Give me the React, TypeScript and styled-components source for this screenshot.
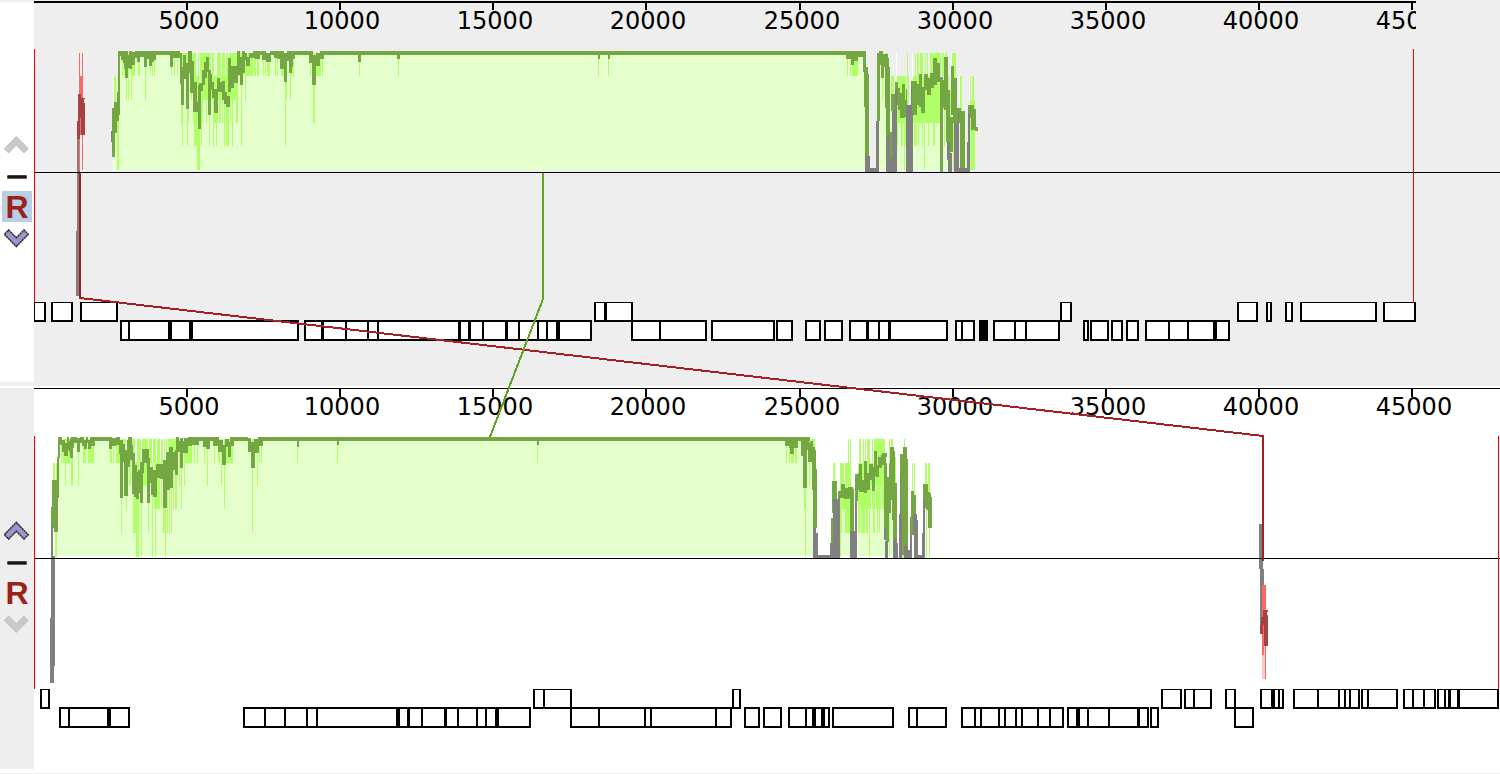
import React from "react";
import styled, { createGlobalStyle } from "styled-components";

const GlobalStyle = createGlobalStyle`
  body { margin: 0; background: #fff; font-family: "DejaVu Sans", sans-serif; }
`;

const Viewer = styled.main`
  position: relative;
  border-bottom: 1px solid #eeeeee;
`;
const Panel = styled.section<{ $selected?: boolean }>`
  display: grid;
  grid-template-columns: 34px minmax(0, 1fr);
  background: ${(p) => (p.$selected ? "#eeeeee" : "#ffffff")};
`;
const Gutter = styled.div<{ $selected?: boolean }>`
  display: flex;
  flex-direction: column;
  align-items: center;
  box-sizing: border-box;
  margin: 2px 0 4px;
  padding-top: 127px;
  background: ${(p) => (p.$selected ? "#ffffff" : "#eeeeee")};
`;
const GutterButton = styled.button<{ $on?: boolean }>`
  display: flex;
  align-items: center;
  justify-content: center;
  width: 30px;
  height: 31px;
  padding: 0;
  border: 0;
  background: ${(p) => (p.$on ? "#b8cfe5" : "transparent")};
  color: #9a2318;
  font: bold 32px/28px "Liberation Sans", sans-serif;
`;
const Track = styled.svg`
  display: block;
  width: 100%;
  height: auto;
  shape-rendering: crispEdges;
`;
const Links = styled.svg`
  position: absolute;
  top: 0;
  left: 34px;
  width: calc(100% - 34px);
  height: auto;
  pointer-events: none;
  shape-rendering: crispEdges;
`;
const TickLabel = styled.text`
  font: 24px "DejaVu Sans", sans-serif;
  text-anchor: middle;
`;

const LIGHT = "#e4ffcc";
const BRIGHT = "#b0ff66";
const DARK = "#74a744";
const GRAY = "#808080";
const RED = "#a64242";
const RED_BRIGHT = "#ff6666";

/* One block of a profile: left, right, top, bottom, on a grid of three units to a pixel. */
type Block = [number, number, number, number];

const Blocks = ({ data, x = 0, y = 0, fill }: { data: Block[]; x?: number; y?: number; fill: string }) => (
  <path
    fill={fill}
    d={data
      .map(([l, r, t, b]) => {
        const [x0, x1, y0, y1] = [l, r, t, b].map((v) => Math.round(v / 3));
        return `M${x + x0} ${y + y0}H${x + Math.max(x1, x0 + 1)}V${y + y1}H${x + x0}Z`;
      })
      .join("")}
  />
);

/* Hanging bars: left, width, bottom in pixels, all starting at the same top. */
const Hangers = ({ data, top }: { data: number[][]; top: number }) => (
  <path fill={BRIGHT} d={data.map(([l, w, b]) => `M${l} ${top}h${w}V${b}h${-w}Z`).join("")} />
);

type Gene = { at: [number, number]; cuts?: [number, number][] };
const g = (l: number, r: number, ...cuts: [number, number][]): Gene => ({ at: [l, r], cuts });

const Genes = ({ list, y, lower }: { list: Gene[]; y: number; lower?: boolean }) => {
  const h = lower ? 21 : 20;
  const top = lower ? 2 : 1;
  return (
    <g>
      {list.map(({ at: [l, r], cuts = [] }) => (
        <g key={l}>
          <rect x={l} y={y} width={r - l} height={h} fill="#000" />
          <rect x={l + 2} y={y + top} width={r - l - 4} height={h - top - 2} fill="#fff" />
          {cuts.map(([c, w]) => (
            <rect key={c} x={c} y={y} width={w} height={h} fill="#000" />
          ))}
        </g>
      ))}
    </g>
  );
};

const TICKS = [5000, 10000, 15000, 20000, 25000, 30000, 35000, 40000, 45000];
const Ruler = ({ y, weight, end }: { y: number; weight: number; end: number }) => (
  <g>
    <rect x={34} y={y} width={end - 34} height={weight} />
    {TICKS.map((n) => {
      const x = 34 + Math.round(n * 0.03062);
      return (
        <g key={n}>
          <rect x={x - 1} y={y} width={2} height={9} />
          <TickLabel x={x + 2} y={y === 1 ? 29 : 415}>{n}</TickLabel>
        </g>
      );
    })}
  </g>
);

const UP_1: Gene[] = [
  g(33, 46), g(51, 73), g(80, 118), g(594, 633, [604, 3]), g(1060, 1072), g(1237, 1258),
  g(1266, 1272), g(1285, 1293), g(1300, 1377), g(1383, 1416),
];
const LOW_1: Gene[] = [
  g(120, 299, [128, 2], [168, 4], [189, 4]),
  g(304, 592, [321, 3], [345, 2], [367, 2], [377, 2], [458, 3], [468, 3], [482, 2], [505, 3], [518, 2], [537, 2], [546, 2], [556, 4]),
  g(631, 707, [659, 2]), g(711, 775), g(776, 793), g(805, 821), g(824, 843),
  g(849, 948, [866, 3], [878, 2], [888, 3]), g(955, 975, [961, 2]), g(979, 988, [979, 9]),
  g(993, 1060, [1014, 2], [1025, 2]), g(1083, 1089), g(1090, 1109), g(1111, 1123), g(1126, 1139),
  g(1145, 1230, [1168, 2], [1187, 2], [1213, 4]),
];
const UP_2: Gene[] = [
  g(40, 50), g(533, 572, [543, 2]), g(732, 741), g(1161, 1182), g(1184, 1212, [1193, 2]), g(1225, 1236),
  g(1260, 1284, [1271, 4], [1278, 2]), g(1293, 1360, [1317, 2], [1338, 2], [1344, 2], [1349, 2]),
  g(1361, 1398, [1367, 2]), g(1403, 1436, [1412, 2], [1423, 2]),
  g(1437, 1499, [1444, 2], [1448, 3], [1457, 3]),
];
const LOW_2: Gene[] = [
  g(59, 130, [68, 2], [107, 4]),
  g(243, 531, [264, 2], [284, 2], [306, 2], [316, 2], [396, 4], [407, 3], [421, 2], [444, 3], [457, 2], [476, 2], [485, 2], [495, 4]),
  g(570, 732, [598, 2], [644, 2], [650, 2], [715, 2]), g(744, 760), g(763, 782),
  g(788, 830, [805, 2], [812, 4], [821, 4]), g(832, 894), g(908, 947, [916, 2]),
  g(961, 1064, [974, 2], [980, 2], [998, 2], [1004, 2], [1015, 2], [1021, 2], [1037, 2], [1049, 2]),
  g(1067, 1149, [1076, 4], [1087, 2], [1108, 2], [1137, 3]), g(1150, 1159), g(1234, 1254),
];

const HANG_1 = [
  [122, 1, 76], [124, 3, 76], [126, 1, 100], [128, 1, 100], [131, 1, 100], [132, 3, 76], [138, 2, 76], [145, 1, 100],
  [150, 1, 76], [152, 1, 76], [154, 1, 76], [171, 1, 76], [174, 1, 76], [177, 1, 76], [180, 60, 76], [181, 2, 123], [182, 1, 146],
  [187, 1, 146], [188, 1, 123], [191, 1, 100], [193, 2, 123], [194, 3, 146], [197, 3, 170], [201, 1, 146], [202, 1, 123],
  [206, 1, 123], [209, 1, 146], [203, 35, 100], [213, 1, 146], [214, 4, 123], [216, 1, 146], [219, 2, 123], [222, 1, 123],
  [224, 1, 146], [226, 3, 146], [230, 1, 123], [232, 1, 146], [236, 2, 123], [239, 2, 76], [241, 1, 146],
  [242, 2, 76], [245, 1, 100], [246, 7, 76], [254, 2, 76], [257, 2, 76], [263, 1, 76], [265, 1, 76], [267, 3, 76],
  [275, 1, 76], [277, 1, 76], [281, 3, 76], [285, 1, 146], [286, 1, 100], [290, 1, 100], [291, 3, 76],
  [310, 1, 76], [313, 2, 123], [316, 5, 76], [322, 1, 76], [359, 1, 76], [398, 1, 76], [598, 1, 76], [608, 1, 76],
  [847, 1, 76], [850, 1, 76], [852, 6, 76],
];
const DARK_1A: Block[] = [
  [336, 345, 325, 470], [342, 351, 306, 400], [351, 356, 275, 362], [354, 360, 153, 345], [360, 363, 153, 168],
  [363, 369, 153, 180], [369, 372, 153, 189], [372, 378, 153, 207], [375, 384, 153, 234], [384, 390, 165, 204],
  [387, 396, 153, 206], [396, 405, 156, 195], [405, 412, 153, 174], [411, 420, 153, 186], [420, 432, 153, 171],
  [432, 441, 153, 202], [441, 447, 153, 177], [447, 456, 153, 197], [456, 462, 153, 186], [462, 468, 153, 180],
  [468, 510, 153, 165],
];
const DARK_1B: Block[] = [
  [0, 8, 33, 82], [8, 30, 33, 55], [30, 36, 38, 132], [34, 42, 80, 195], [39, 48, 45, 118], [48, 57, 70, 207],
  [54, 66, 33, 98], [60, 72, 62, 160], [69, 81, 125, 215], [78, 86, 185, 215], [84, 93, 135, 267], [87, 99, 130, 153],
  [96, 105, 90, 135], [103, 110, 65, 115], [108, 117, 50, 95], [114, 123, 90, 225], [120, 126, 102, 150], [125, 132, 125, 175],
  [132, 143, 148, 218], [141, 150, 113, 155], [147, 156, 127, 157], [156, 165, 123, 180], [162, 170, 155, 193],
  [168, 180, 168, 200], [174, 183, 55, 155], [180, 192, 78, 145], [192, 204, 78, 130], [201, 210, 33, 105],
  [210, 219, 50, 135], [216, 225, 33, 100], [222, 230, 40, 60], [227, 240, 50, 78], [237, 249, 40, 55], [249, 255, 33, 55],
  [255, 270, 33, 57], [270, 276, 33, 45], [276, 288, 33, 60], [288, 302, 38, 65], [300, 312, 33, 45], [312, 322, 33, 55],
  [321, 330, 33, 58], [330, 342, 33, 87], [342, 351, 40, 125], [351, 357, 33, 62], [357, 366, 33, 98], [363, 369, 40, 80],
  [366, 375, 33, 57], [375, 417, 33, 45], [417, 430, 33, 68], [426, 438, 45, 135], [438, 450, 40, 78], [450, 462, 33, 57],
  [456, 2088, 33, 45], [564, 573, 33, 66], [682, 690, 33, 56], [1284, 1290, 33, 57], [1314, 1320, 33, 57],
];
const DARK_1C: Block[] = [
  [0, 50, 33, 45], [48, 62, 36, 58], [62, 72, 40, 76], [70, 84, 40, 62], [81, 100, 33, 52], [99, 108, 33, 95],
  [102, 114, 80, 200], [105, 117, 102, 348], [141, 150, 40, 243], [147, 160, 33, 75], [153, 163, 50, 113], [160, 174, 42, 82],
  [165, 177, 55, 205], [168, 180, 80, 285], [180, 189, 275, 355], [183, 195, 162, 213], [195, 204, 125, 180],
  [198, 210, 145, 195], [204, 216, 160, 210], [210, 222, 180, 235], [216, 225, 132, 235], [222, 231, 180, 230], [228, 231, 147, 180],
  [243, 260, 123, 225], [258, 270, 133, 195], [267, 276, 102, 200], [273, 285, 140, 218], [282, 294, 102, 150],
  [291, 303, 115, 165], [300, 312, 100, 145], [309, 321, 55, 135], [318, 330, 68, 125], [330, 339, 110, 395],
  [330, 348, 120, 205], [342, 354, 50, 210], [349, 360, 150, 305], [354, 369, 230, 335], [363, 372, 78, 225],
  [369, 381, 115, 250], [376, 394, 205, 250], [390, 405, 212, 385], [414, 432, 195, 235], [423, 438, 207, 270], [435, 443, 262, 273],
];
const GRAY_1: Block[] = [
  [105, 120, 348, 395], [108, 148, 384, 396], [138, 147, 243, 390], [168, 180, 285, 396], [171, 186, 354, 396],
  [186, 200, 213, 396], [195, 200, 150, 396], [228, 243, 195, 396], [231, 249, 220, 396], [243, 246, 138, 396],
  [351, 360, 305, 360], [354, 366, 340, 396], [372, 387, 250, 396], [384, 388, 220, 396], [384, 420, 384, 396], [411, 418, 305, 385], [414, 420, 220, 385],
];
const BRIGHT_1: Block[] = [
  [156, 159, 60, 180], [165, 174, 39, 180], [183, 192, 108, 165], [198, 228, 108, 249], [201, 204, 249, 318], [213, 219, 249, 318], [222, 225, 249, 390],
  [225, 231, 200, 318], [231, 234, 39, 108], [231, 237, 108, 200], [246, 249, 39, 108], [249, 330, 108, 249], [255, 258, 39, 108], [261, 267, 39, 108],
  [270, 279, 39, 108], [285, 288, 39, 108], [291, 293, 39, 108], [300, 334, 39, 108], [336, 342, 39, 108],
  [345, 351, 39, 108], [252, 261, 249, 318], [264, 267, 249, 318], [276, 279, 249, 318], [282, 285, 249, 390],
  [294, 297, 249, 318], [309, 315, 249, 318], [342, 345, 205, 318], [354, 357, 108, 249], [357, 363, 150, 249], [366, 378, 39, 120],
  [369, 372, 249, 390], [390, 396, 108, 215], [402, 406, 215, 390], [420, 424, 108, 390], [426, 432, 108, 390], [420, 435, 180, 390],
];

const HANG_2 = [
  [61, 1, 463], [63, 4, 463], [65, 1, 486], [67, 3, 463], [71, 2, 486], [78, 1, 486], [83, 3, 463], [88, 6, 463],
  [110, 2, 463], [113, 1, 463], [116, 4, 463], [121, 1, 533], [122, 56, 463], [126, 1, 509], [129, 2, 486], [133, 6, 533],
  [136, 3, 557], [141, 1, 557], [143, 6, 486], [148, 1, 533], [152, 1, 557], [155, 1, 557], [154, 6, 509], [161, 1, 509],
  [163, 3, 533], [165, 1, 557], [167, 1, 533], [169, 1, 533], [171, 1, 533], [173, 1, 509], [175, 2, 509], [179, 1, 486],
  [181, 1, 509], [184, 1, 486], [185, 7, 463], [194, 1, 463], [197, 1, 463], [204, 1, 463], [207, 1, 486], [214, 1, 463],
  [218, 2, 463], [221, 1, 486], [224, 1, 509], [225, 8, 463], [252, 1, 533], [253, 1, 463], [257, 1, 486], [259, 1, 463],
  [261, 1, 463], [297, 1, 463], [337, 1, 463], [537, 1, 463],
];
const DARK_2A: Block[] = [
  [153, 159, 260, 315], [156, 166, 180, 325], [161, 173, 222, 335], [165, 172, 180, 320], [170, 177, 110, 235], [174, 180, 51, 115],
  [180, 186, 51, 75], [186, 195, 60, 95], [193, 204, 68, 107], [201, 207, 51, 90], [207, 213, 62, 97], [210, 219, 55, 113],
  [213, 222, 51, 85], [222, 231, 51, 68], [231, 240, 55, 95], [239, 246, 51, 70], [246, 253, 51, 78], [252, 260, 60, 88],
  [258, 264, 51, 70], [264, 273, 60, 88], [270, 285, 51, 78], [285, 327, 51, 63], [327, 336, 51, 87], [336, 348, 55, 78],
  [348, 360, 51, 76], [357, 363, 70, 103], [360, 369, 60, 235], [366, 375, 72, 125], [373, 384, 90, 228], [381, 390, 60, 140],
  [384, 396, 51, 80], [390, 399, 75, 120], [396, 404, 100, 222], [402, 411, 135, 232], [407, 417, 155, 237], [415, 423, 150, 220],
  [420, 429, 125, 250], [426, 432, 87, 160], [432, 447, 87, 130], [441, 450, 115, 250], [447, 459, 140, 190],
  [453, 465, 155, 225], [459, 471, 150, 230], [468, 480, 133, 175], [480, 492, 133, 178], [489, 501, 120, 263],
  [498, 510, 95, 210], [507, 519, 80, 205], [516, 528, 95, 150], [524, 534, 90, 165], [528, 537, 51, 90], [534, 543, 62, 95],
  [540, 549, 55, 143], [546, 555, 62, 100], [552, 564, 53, 100], [563, 576, 51, 78], [576, 598, 51, 76], [597, 612, 51, 63],
  [610, 630, 51, 80], [618, 630, 60, 87], [628, 642, 51, 63], [640, 657, 51, 78], [654, 669, 60, 97], [667, 678, 75, 135],
  [676, 687, 57, 80], [684, 693, 65, 112], [690, 702, 51, 78], [700, 744, 51, 63], [744, 754, 55, 95], [753, 765, 65, 145],
  [762, 776, 57, 100], [774, 788, 51, 78], [786, 2315, 51, 63], [891, 897, 51, 80], [1011, 1017, 51, 75], [1611, 1617, 51, 75],
];
const DARK_2B: Block[] = [
  [0, 120, 21, 33], [45, 57, 21, 48], [57, 63, 30, 54], [60, 72, 30, 72], [70, 84, 27, 55], [93, 102, 27, 78], [99, 111, 33, 174],
  [108, 117, 27, 60], [114, 126, 40, 95], [120, 130, 33, 85], [126, 135, 50, 180], [129, 141, 118, 294], [132, 138, 60, 130],
  [183, 192, 264, 340], [186, 198, 153, 250], [194, 201, 153, 210], [204, 216, 183, 205], [213, 225, 162, 205],
  [222, 237, 173, 207], [234, 250, 172, 205], [240, 252, 178, 303], [255, 264, 132, 213], [264, 273, 130, 180],
  [267, 276, 102, 185], [273, 285, 150, 185], [282, 291, 93, 188], [288, 300, 130, 180], [297, 309, 102, 150], [306, 315, 110, 182],
  [312, 321, 63, 138], [318, 327, 105, 142], [324, 336, 80, 115], [333, 348, 75, 105], [337, 350, 68, 80], [342, 351, 100, 295],
  [348, 357, 140, 335], [354, 363, 160, 250], [357, 366, 100, 210], [360, 372, 50, 210], [366, 375, 62, 270], [369, 380, 160, 327],
  [390, 402, 72, 374], [399, 411, 52, 350], [405, 414, 87, 350], [420, 426, 262, 315], [423, 432, 183, 315],
  [432, 438, 195, 252], [459, 474, 162, 235], [468, 480, 185, 240], [474, 486, 200, 294], [480, 483, 190, 205],
];
const GRAY_2: Block[] = [
  [129, 144, 308, 384], [129, 139, 294, 320], [135, 189, 375, 384], [180, 190, 340, 384], [189, 210, 207, 384], [204, 210, 200, 240],
  [240, 255, 303, 384], [249, 260, 312, 384], [255, 261, 213, 384], [342, 348, 295, 330], [345, 354, 333, 384], [369, 381, 327, 384], [375, 384, 340, 384],
  [387, 396, 252, 384], [390, 393, 135, 384], [402, 413, 348, 384], [402, 423, 360, 384], [420, 426, 315, 384],
  [429, 441, 252, 315], [432, 444, 270, 384], [435, 465, 375, 384], [456, 462, 309, 384], [459, 465, 210, 384],
];
const BRIGHT_2: Block[] = [
  [48, 51, 33, 99], [57, 60, 33, 99], [63, 72, 33, 99], [75, 81, 33, 99], [102, 106, 27, 237], [105, 108, 27, 381],
  [117, 120, 33, 168], [123, 135, 27, 99], [132, 135, 27, 120], [189, 195, 99, 153], [210, 222, 99, 180], [225, 243, 99, 180],
  [207, 250, 180, 309], [210, 213, 309, 381], [234, 237, 27, 99], [240, 243, 27, 99], [264, 345, 99, 237], [267, 273, 27, 99], [279, 282, 27, 99],
  [285, 288, 27, 99], [291, 300, 27, 99], [306, 309, 27, 99], [312, 345, 27, 99], [264, 270, 237, 309], [273, 285, 237, 309],
  [288, 294, 237, 309], [297, 300, 237, 381], [309, 315, 237, 309], [321, 324, 237, 309], [327, 330, 237, 309],
  [357, 360, 27, 381], [363, 369, 27, 60], [366, 378, 80, 237], [396, 402, 300, 384], [402, 405, 27, 55], [426, 429, 99, 183], [432, 435, 99, 252],
  [465, 471, 99, 165], [474, 480, 99, 205], [468, 471, 230, 381], [477, 480, 280, 381],
];

const Chevron = ({ down, active }: { down?: boolean; active?: boolean }) => (
  <svg width="30" height="31" viewBox="0 0 30 31" aria-hidden="true">
    <path
      transform={down ? "matrix(1 0 0 -1 0 32)" : undefined}
      d="M14.3 7.5 26.3 19.7 22 24 14.3 16.2 6.6 24 2.3 19.7Z"
      fill={active ? "#9999cf" : "#c9c9c9"}
      stroke={active ? "#343438" : "#c0c0c0"}
      strokeWidth={active ? 1.6 : 1}
      strokeDasharray={active ? "2.2 .5" : undefined}
    />
  </svg>
);
const Dash = () => (
  <svg width="30" height="31" viewBox="0 0 30 31" aria-hidden="true">
    <rect x="5" y="15" width="20" height="4" rx="1" fill="#777" />
    <rect x="5.5" y="15.6" width="19" height="2.6" rx="1" fill="#161616" />
  </svg>
);

const Controls = ({ selected }: { selected?: boolean }) => (
  <Gutter $selected={selected}>
    <GutterButton type="button" aria-label="Move sequence up"><Chevron active={!selected} /></GutterButton>
    <GutterButton type="button" aria-label="Collapse sequence"><Dash /></GutterButton>
    <GutterButton type="button" $on={selected} aria-pressed={!!selected}>R</GutterButton>
    <GutterButton type="button" aria-label="Move sequence down"><Chevron down active={selected} /></GutterButton>
  </Gutter>
);

const Gaps = ({ data, y, fill }: { data: number[][]; y: number; fill: string }) => (
  <path fill={fill} d={data.map(([x, w]) => `M${x} ${y}h${w}v23h${-w}Z`).join("")} />
);

export default function App() {
  return (
    <>
      <GlobalStyle />
      <Viewer>
        <Panel $selected>
          <Controls selected />
          <Track viewBox="34 0 1466 386" role="img" aria-label="First genome">
            <defs><clipPath id="firstRange"><rect x="34" y="0" width="1382" height="50" /></clipPath></defs>
            <g clipPath="url(#firstRange)"><Ruler y={1} weight={2} end={1416} /></g>
            <path fill={LIGHT} d="M114 76h5V53H866V170H114ZM879 60h9V170h-9ZM890 108h8V170h-8ZM898 123h9V170h-9ZM913 100h27V170h-27ZM945 123h5V170h-5ZM965 120h1V170h-1Z" />
            <Hangers data={HANG_1} top={53} />
            <Gaps data={[[196, 2], [199, 1], [211, 1], [214, 3], [221, 1], [225, 1], [228, 1]]} y={53} fill="#eeeeee" />
            <Blocks data={[[342, 348, 228, 315], [351, 357, 300, 510]]} fill={BRIGHT} />
            <Blocks data={BRIGHT_1} x={830} y={40} fill={BRIGHT} />
            <path fill="#fff" d="M78 76h1v20h-1ZM113 76h1v95h-1ZM896 53h1v50h-1ZM912 53h1v35h-1ZM951 53h1v60h-1ZM959 76h1v35h-1ZM969 76h1v40h-1Z" />
            <Blocks data={[[333, 339, 393, 425]]} fill={GRAY} />
            <Blocks data={DARK_1A} fill={DARK} />
            <Blocks data={DARK_1B} x={170} y={40} fill={DARK} />
            <Blocks data={DARK_1C} x={830} y={40} fill={DARK} />
            <Blocks data={GRAY_1} x={830} y={40} fill={GRAY} />
            <Blocks data={[[231, 240, 415, 700], [228, 238, 693, 888]]} fill={GRAY} />
            <Blocks data={[[237, 240, 159, 510], [246, 249, 159, 510], [237, 249, 228, 405]]} fill={RED_BRIGHT} />
            <Blocks data={[[234, 243, 282, 354], [231, 240, 362, 417], [234, 240, 350, 417], [243, 252, 293, 405], [249, 255, 308, 405], [252, 255, 294, 298]]} fill={RED} />
            <rect x="34" y="172" width="1466" height="1" />
            <rect x="34" y="49" width="1" height="253" fill="#f00" />
            <Genes list={UP_1} y={302} />
            <Genes list={LOW_1} y={320} lower />
            <rect x="1413" y="49" width="1" height="254" fill="#f00" />
          </Track>
        </Panel>
        <Panel>
          <Controls />
          <Track viewBox="34 386 1466 387" role="img" aria-label="Second genome">
            <Ruler y={388} weight={1} end={1500} />
            <path fill={LIGHT} d="M55 530h4V439H813V556H55ZM840 509h10V556h-10ZM858 486h27V556h-27ZM889 509h4V556h-4Z" />
            <Hangers data={HANG_2} top={439} />
            <Gaps data={[[126, 2], [135, 2], [141, 1], [148, 1], [152, 1], [156, 1], [160, 1], [163, 1], [165, 1], [167, 1]]} y={439} fill="#ffffff" />
            <Blocks data={[[159, 164, 129, 180], [168, 172, 129, 180], [165, 171, 330, 411]]} y={420} fill={BRIGHT} />
            <Blocks data={BRIGHT_2} x={770} y={430} fill={BRIGHT} />
            <Blocks data={[[216, 225, 237, 309], [303, 306, 168, 237], [315, 318, 168, 237], [333, 336, 168, 237]]} x={770} y={430} fill={LIGHT} />
            <Blocks data={DARK_2A} y={420} fill={DARK} />
            <Blocks data={DARK_2B} x={770} y={430} fill={DARK} />
            <Blocks data={GRAY_2} x={770} y={430} fill={GRAY} />
            <Blocks data={[[153, 159, 315, 420], [153, 165, 408, 738], [150, 162, 594, 788]]} y={420} fill={GRAY} />
            <Blocks data={[[477, 489, 42, 177], [480, 492, 177, 330], [480, 486, 320, 352]]} x={1100} y={510} fill={GRAY} />
            <Blocks data={[[486, 495, 405, 507]]} x={1100} y={510} fill="#ffc8c8" />
            <Blocks data={[[486, 498, 225, 345], [486, 492, 340, 435], [495, 498, 400, 507]]} x={1100} y={510} fill={RED_BRIGHT} />
            <Blocks data={[[489, 501, 300, 345], [501, 504, 300, 306], [483, 492, 321, 345], [480, 489, 345, 372], [492, 504, 315, 408]]} x={1100} y={510} fill={RED} />
            <rect x="34" y="558" width="1466" height="1" />
            <rect x="34" y="436" width="1" height="253" fill="#f00" />
            <rect x="1498" y="436" width="1" height="253" fill="#f00" />
            <Genes list={UP_2} y={689} />
            <Genes list={LOW_2} y={707} lower />
          </Track>
        </Panel>
        <Links viewBox="34 0 1466 773" fill="none" strokeWidth="2" aria-hidden="true">
          <path d="M80 173V298L1263 436V561" stroke="#a52022" />
          <path d="M543 173V299L490 437" stroke="#60a420" />
        </Links>
      </Viewer>
    </>
  );
}
